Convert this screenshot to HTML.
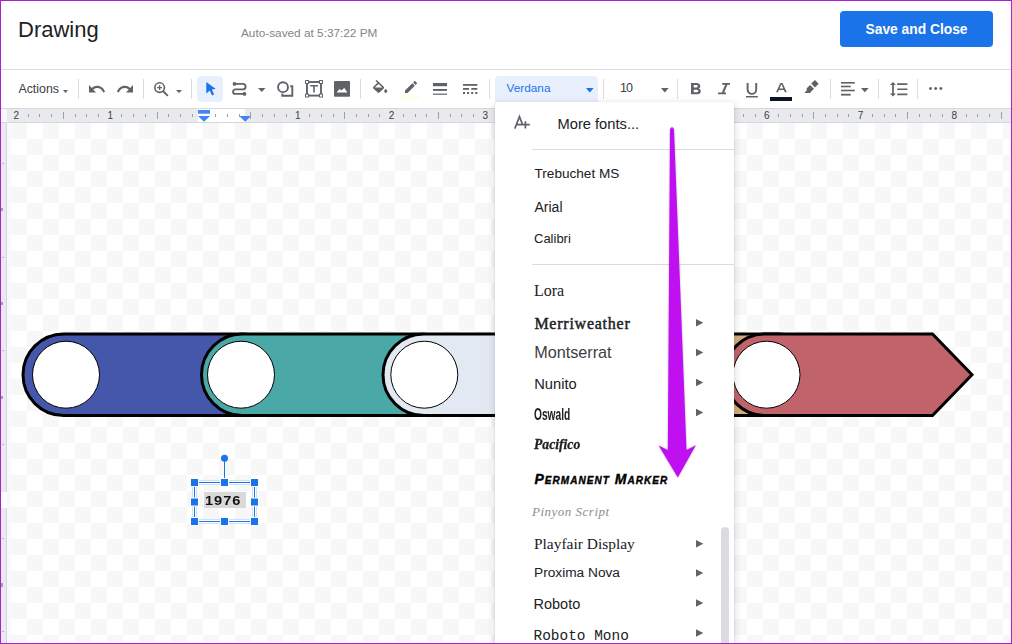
<!DOCTYPE html>
<html><head><meta charset="utf-8">
<style>
*{box-sizing:border-box;margin:0;padding:0}
html,body{width:1012px;height:644px;overflow:hidden;background:#fff;font-family:"Liberation Sans",sans-serif;position:relative}
.a{position:absolute}
.t{position:absolute;white-space:nowrap;line-height:1}
.sep{position:absolute;width:1px;background:#dadce0;top:79px;height:20px}
svg.i{position:absolute;overflow:visible}
.g{fill:#5f6368}
</style></head><body>

<!-- header -->
<div class="t" style="left:18px;top:18.8px;font-size:22px;color:#202124">Drawing</div>
<div class="t" style="left:241px;top:27.9px;font-size:11.8px;color:#80868b">Auto-saved at 5:37:22 PM</div>
<div class="a" style="left:840px;top:11px;width:153px;height:36px;background:#1a73e8;border-radius:4px"></div>
<div class="t" style="left:865.5px;top:22.6px;font-size:13.8px;font-weight:bold;color:#fff">Save and Close</div>

<!-- toolbar border -->
<div class="a" style="left:0;top:69px;width:1012px;height:1px;background:#dadce0"></div>

<!-- ruler -->
<div class="a" style="left:0;top:108px;width:1012px;height:15px;background:#e8eaed;border-top:1px solid #d5d7da;border-bottom:1px solid #d5d7da"></div>
<div class="a" style="left:0;top:109px;width:7px;height:13px;background:#f8f9fa"></div>
<div class="a" style="left:198px;top:109px;width:47px;height:13px;background:#fff"></div>
<div id="canvas" class="a" style="left:7px;top:123px;width:1005px;height:521px;background:#f8f9fa"></div>
<div class="a" style="left:11px;top:123px;width:999px;height:519px;background:repeating-conic-gradient(#fff 0 25%,#f7f7f7 0 50%) 0 0/32px 32px"></div>
<div class="a" style="left:0;top:123px;width:7px;height:521px;background:#e8eaed;border-right:1px solid #d5d7da"></div>
<div class="a" style="left:1px;top:492px;width:5.5px;height:16px;background:#fff"></div>
<div class="a" style="left:1px;top:207.8px;width:2.2px;height:3.5px;background:#5f6368;opacity:.55"></div>
<div class="a" style="left:1px;top:301.7px;width:2.2px;height:3.5px;background:#5f6368;opacity:.55"></div>
<div class="a" style="left:1px;top:395.6px;width:2.2px;height:3.5px;background:#5f6368;opacity:.55"></div>
<div class="a" style="left:1px;top:583.4px;width:2.2px;height:3.5px;background:#5f6368;opacity:.55"></div>
<div class="a" style="left:2px;top:163.0px;width:1.5px;height:1px;background:#b0b4b8"></div>
<div class="a" style="left:2px;top:256.7px;width:1.5px;height:1px;background:#b0b4b8"></div>
<div class="a" style="left:2px;top:350.4px;width:1.5px;height:1px;background:#b0b4b8"></div>
<div class="a" style="left:2px;top:444.1px;width:1.5px;height:1px;background:#b0b4b8"></div>
<div class="a" style="left:2px;top:537.5px;width:1.5px;height:1px;background:#b0b4b8"></div>
<div class="a" style="left:2px;top:631.0px;width:1.5px;height:1px;background:#b0b4b8"></div>

<svg class="a" style="left:0;top:0" width="1012" height="130" id="markers"><g fill="#4285f4"><rect x="198" y="110" width="12" height="3.7"/><path d="M198 115.9H210L204 121.8z"/><path d="M239.3 115.9H251L245.15 121.8z"/></g></svg>
<div id="rulerticks"><div class="t" style="left:13.4px;top:110.6px;width:6px;text-align:center;font-size:10px;color:#3c4043">2</div>
<div class="a" style="left:27.6px;top:114px;width:1px;height:3px;background:#9aa0a6"></div>
<div class="a" style="left:39.3px;top:114px;width:1px;height:3px;background:#9aa0a6"></div>
<div class="a" style="left:51.1px;top:114px;width:1px;height:3px;background:#9aa0a6"></div>
<div class="a" style="left:62.8px;top:112px;width:1px;height:6.5px;background:#9aa0a6"></div>
<div class="a" style="left:74.5px;top:114px;width:1px;height:3px;background:#9aa0a6"></div>
<div class="a" style="left:86.2px;top:114px;width:1px;height:3px;background:#9aa0a6"></div>
<div class="a" style="left:98.0px;top:114px;width:1px;height:3px;background:#9aa0a6"></div>
<div class="t" style="left:107.2px;top:110.6px;width:6px;text-align:center;font-size:10px;color:#3c4043">1</div>
<div class="a" style="left:121.4px;top:114px;width:1px;height:3px;background:#9aa0a6"></div>
<div class="a" style="left:133.2px;top:114px;width:1px;height:3px;background:#9aa0a6"></div>
<div class="a" style="left:144.9px;top:114px;width:1px;height:3px;background:#9aa0a6"></div>
<div class="a" style="left:156.6px;top:112px;width:1px;height:6.5px;background:#9aa0a6"></div>
<div class="a" style="left:168.3px;top:114px;width:1px;height:3px;background:#9aa0a6"></div>
<div class="a" style="left:180.1px;top:114px;width:1px;height:3px;background:#9aa0a6"></div>
<div class="a" style="left:191.8px;top:114px;width:1px;height:3px;background:#9aa0a6"></div>
<div class="a" style="left:215.2px;top:114px;width:1px;height:3px;background:#9aa0a6"></div>
<div class="a" style="left:226.9px;top:114px;width:1px;height:3px;background:#9aa0a6"></div>
<div class="a" style="left:238.7px;top:114px;width:1px;height:3px;background:#9aa0a6"></div>
<div class="a" style="left:250.4px;top:112px;width:1px;height:6.5px;background:#9aa0a6"></div>
<div class="a" style="left:262.1px;top:114px;width:1px;height:3px;background:#9aa0a6"></div>
<div class="a" style="left:273.9px;top:114px;width:1px;height:3px;background:#9aa0a6"></div>
<div class="a" style="left:285.6px;top:114px;width:1px;height:3px;background:#9aa0a6"></div>
<div class="t" style="left:294.8px;top:110.6px;width:6px;text-align:center;font-size:10px;color:#3c4043">1</div>
<div class="a" style="left:309.0px;top:114px;width:1px;height:3px;background:#9aa0a6"></div>
<div class="a" style="left:320.8px;top:114px;width:1px;height:3px;background:#9aa0a6"></div>
<div class="a" style="left:332.5px;top:114px;width:1px;height:3px;background:#9aa0a6"></div>
<div class="a" style="left:344.2px;top:112px;width:1px;height:6.5px;background:#9aa0a6"></div>
<div class="a" style="left:355.9px;top:114px;width:1px;height:3px;background:#9aa0a6"></div>
<div class="a" style="left:367.6px;top:114px;width:1px;height:3px;background:#9aa0a6"></div>
<div class="a" style="left:379.4px;top:114px;width:1px;height:3px;background:#9aa0a6"></div>
<div class="t" style="left:388.6px;top:110.6px;width:6px;text-align:center;font-size:10px;color:#3c4043">2</div>
<div class="a" style="left:402.8px;top:114px;width:1px;height:3px;background:#9aa0a6"></div>
<div class="a" style="left:414.5px;top:114px;width:1px;height:3px;background:#9aa0a6"></div>
<div class="a" style="left:426.3px;top:114px;width:1px;height:3px;background:#9aa0a6"></div>
<div class="a" style="left:438.0px;top:112px;width:1px;height:6.5px;background:#9aa0a6"></div>
<div class="a" style="left:449.7px;top:114px;width:1px;height:3px;background:#9aa0a6"></div>
<div class="a" style="left:461.4px;top:114px;width:1px;height:3px;background:#9aa0a6"></div>
<div class="a" style="left:473.2px;top:114px;width:1px;height:3px;background:#9aa0a6"></div>
<div class="t" style="left:482.4px;top:110.6px;width:6px;text-align:center;font-size:10px;color:#3c4043">3</div>
<div class="a" style="left:496.6px;top:114px;width:1px;height:3px;background:#9aa0a6"></div>
<div class="a" style="left:508.3px;top:114px;width:1px;height:3px;background:#9aa0a6"></div>
<div class="a" style="left:520.1px;top:114px;width:1px;height:3px;background:#9aa0a6"></div>
<div class="a" style="left:531.8px;top:112px;width:1px;height:6.5px;background:#9aa0a6"></div>
<div class="a" style="left:543.5px;top:114px;width:1px;height:3px;background:#9aa0a6"></div>
<div class="a" style="left:555.2px;top:114px;width:1px;height:3px;background:#9aa0a6"></div>
<div class="a" style="left:567.0px;top:114px;width:1px;height:3px;background:#9aa0a6"></div>
<div class="t" style="left:576.2px;top:110.6px;width:6px;text-align:center;font-size:10px;color:#3c4043">4</div>
<div class="a" style="left:590.4px;top:114px;width:1px;height:3px;background:#9aa0a6"></div>
<div class="a" style="left:602.1px;top:114px;width:1px;height:3px;background:#9aa0a6"></div>
<div class="a" style="left:613.9px;top:114px;width:1px;height:3px;background:#9aa0a6"></div>
<div class="a" style="left:625.6px;top:112px;width:1px;height:6.5px;background:#9aa0a6"></div>
<div class="a" style="left:637.3px;top:114px;width:1px;height:3px;background:#9aa0a6"></div>
<div class="a" style="left:649.0px;top:114px;width:1px;height:3px;background:#9aa0a6"></div>
<div class="a" style="left:660.8px;top:114px;width:1px;height:3px;background:#9aa0a6"></div>
<div class="t" style="left:670.0px;top:110.6px;width:6px;text-align:center;font-size:10px;color:#3c4043">5</div>
<div class="a" style="left:684.2px;top:114px;width:1px;height:3px;background:#9aa0a6"></div>
<div class="a" style="left:696.0px;top:114px;width:1px;height:3px;background:#9aa0a6"></div>
<div class="a" style="left:707.7px;top:114px;width:1px;height:3px;background:#9aa0a6"></div>
<div class="a" style="left:719.4px;top:112px;width:1px;height:6.5px;background:#9aa0a6"></div>
<div class="a" style="left:731.1px;top:114px;width:1px;height:3px;background:#9aa0a6"></div>
<div class="a" style="left:742.9px;top:114px;width:1px;height:3px;background:#9aa0a6"></div>
<div class="a" style="left:754.6px;top:114px;width:1px;height:3px;background:#9aa0a6"></div>
<div class="t" style="left:763.8px;top:110.6px;width:6px;text-align:center;font-size:10px;color:#3c4043">6</div>
<div class="a" style="left:778.0px;top:114px;width:1px;height:3px;background:#9aa0a6"></div>
<div class="a" style="left:789.8px;top:114px;width:1px;height:3px;background:#9aa0a6"></div>
<div class="a" style="left:801.5px;top:114px;width:1px;height:3px;background:#9aa0a6"></div>
<div class="a" style="left:813.2px;top:112px;width:1px;height:6.5px;background:#9aa0a6"></div>
<div class="a" style="left:824.9px;top:114px;width:1px;height:3px;background:#9aa0a6"></div>
<div class="a" style="left:836.6px;top:114px;width:1px;height:3px;background:#9aa0a6"></div>
<div class="a" style="left:848.4px;top:114px;width:1px;height:3px;background:#9aa0a6"></div>
<div class="t" style="left:857.6px;top:110.6px;width:6px;text-align:center;font-size:10px;color:#3c4043">7</div>
<div class="a" style="left:871.8px;top:114px;width:1px;height:3px;background:#9aa0a6"></div>
<div class="a" style="left:883.5px;top:114px;width:1px;height:3px;background:#9aa0a6"></div>
<div class="a" style="left:895.3px;top:114px;width:1px;height:3px;background:#9aa0a6"></div>
<div class="a" style="left:907.0px;top:112px;width:1px;height:6.5px;background:#9aa0a6"></div>
<div class="a" style="left:918.7px;top:114px;width:1px;height:3px;background:#9aa0a6"></div>
<div class="a" style="left:930.4px;top:114px;width:1px;height:3px;background:#9aa0a6"></div>
<div class="a" style="left:942.2px;top:114px;width:1px;height:3px;background:#9aa0a6"></div>
<div class="t" style="left:951.4px;top:110.6px;width:6px;text-align:center;font-size:10px;color:#3c4043">8</div>
<div class="a" style="left:965.6px;top:114px;width:1px;height:3px;background:#9aa0a6"></div>
<div class="a" style="left:977.4px;top:114px;width:1px;height:3px;background:#9aa0a6"></div>
<div class="a" style="left:989.1px;top:114px;width:1px;height:3px;background:#9aa0a6"></div>
<div class="a" style="left:1000.8px;top:112px;width:1px;height:6.5px;background:#9aa0a6"></div></div>

<!-- shapes -->
<svg class="a" style="left:0;top:0" width="1012" height="644">
 <g stroke="#000" stroke-width="3">
  <rect x="23" y="334" width="260" height="81.5" rx="40.75" fill="#4557ab"/>
  <rect x="201.5" y="334" width="260" height="81.5" rx="40.75" fill="#4aa8a6"/>
  <rect x="383" y="334" width="260" height="81.5" rx="40.75" fill="#e3e9f3"/>
  <rect x="560" y="334" width="260" height="81.5" rx="40.75" fill="#d4aa7d"/>
  <path d="M765 334 H932.5 L972 374.75 L932.5 415.5 H765 A40.75 40.75 0 0 1 765 334 Z" fill="#c0636a"/>
 </g>
 <g stroke="#000" stroke-width="1" fill="#fff">
  <circle cx="66" cy="374.7" r="33.5"/>
  <circle cx="241" cy="374.7" r="33.5"/>
  <circle cx="424.3" cy="374.7" r="33.5"/>
  <circle cx="766.5" cy="374.7" r="33.5"/>
 </g>
</svg>

<!-- text box 1976 -->
<div class="a" style="left:204px;top:492px;width:42px;height:16px;background:#d9d9d9"></div>
<div class="t" style="left:205px;top:494px;font-size:13px;font-weight:bold;color:#111;letter-spacing:0.9px;transform:scaleX(1.12);transform-origin:0 0">1976</div>
<svg class="a" style="left:0;top:0" width="1012" height="644">
 <g fill="none">
  <rect x="194.5" y="482.5" width="60" height="39" stroke-width="5" stroke="#cfe0fc"/>
  <rect x="194.5" y="482.5" width="60" height="39" stroke-width="3" stroke="#fff"/>
  <rect x="194.5" y="482.5" width="60" height="39" stroke-width="1" stroke="#1a73e8"/>
  <line x1="224.5" y1="458" x2="224.5" y2="479" stroke-width="1" stroke="#1a73e8"/>
 </g>
 <rect x="190" y="478" width="9" height="9" fill="#fff"/><rect x="191" y="479" width="7" height="7" fill="#1a73e8"/><rect x="220" y="478" width="9" height="9" fill="#fff"/><rect x="221" y="479" width="7" height="7" fill="#1a73e8"/><rect x="250" y="478" width="9" height="9" fill="#fff"/><rect x="251" y="479" width="7" height="7" fill="#1a73e8"/><rect x="190" y="497.5" width="9" height="9" fill="#fff"/><rect x="191" y="498.5" width="7" height="7" fill="#1a73e8"/><rect x="250" y="497.5" width="9" height="9" fill="#fff"/><rect x="251" y="498.5" width="7" height="7" fill="#1a73e8"/><rect x="190" y="517" width="9" height="9" fill="#fff"/><rect x="191" y="518" width="7" height="7" fill="#1a73e8"/><rect x="220" y="517" width="9" height="9" fill="#fff"/><rect x="221" y="518" width="7" height="7" fill="#1a73e8"/><rect x="250" y="517" width="9" height="9" fill="#fff"/><rect x="251" y="518" width="7" height="7" fill="#1a73e8"/>
 <circle cx="224.5" cy="458.3" r="3.5" fill="#1a73e8"/>
</svg>

<!-- toolbar -->
<div class="t" style="left:18.4px;top:82.6px;font-size:12.4px;color:#3c4043">Actions</div>
<svg class="i" style="left:63px;top:89.5px" width="5" height="3" viewBox="0 0 5 3"><path class="g" d="M0 0h5L2.5 3z"/></svg>
<div class="sep" style="left:78px"></div>
<svg class="i" style="left:89px;top:84.8px" width="16" height="7.5" viewBox="2 7 20.47 9" preserveAspectRatio="none"><path class="g" d="M12.5 8c-2.65 0-5.05.99-6.9 2.6L2 7v9h9l-3.62-3.62c1.39-1.16 3.160-1.88 5.12-1.88 3.54 0 6.55 2.31 7.6 5.5l2.37-.78C21.08 11.03 17.15 8 12.5 8z"/></svg>
<svg class="i" style="left:117px;top:84.8px" width="16" height="7.5" viewBox="1.54 7 20.46 9" preserveAspectRatio="none"><path class="g" d="M18.4 10.6C16.55 8.99 14.15 8 11.5 8c-4.65 0-8.58 3.03-9.96 7.22L3.9 16c1.05-3.19 4.05-5.5 7.6-5.5 1.95 0 3.73.72 5.12 1.88L13 16h9V7l-3.6 3.6z"/></svg>
<div class="sep" style="left:143px"></div>
<svg class="i" style="left:154px;top:82.3px" width="14.5" height="14.5" viewBox="0 0 14.5 14.5"><circle cx="5.6" cy="5.6" r="4.8" fill="none" stroke="#5f6368" stroke-width="1.6"/><path d="M9 9l4.8 4.8" stroke="#5f6368" stroke-width="1.9"/><path d="M5.6 3.2v4.8M3.2 5.6h4.8" stroke="#5f6368" stroke-width="1.3"/></svg>
<svg class="i" style="left:175.5px;top:89.5px" width="6" height="3" viewBox="0 0 6 3"><path class="g" d="M0 0h6L3 3z"/></svg>
<div class="sep" style="left:191px"></div>
<div class="a" style="left:197px;top:76px;width:26px;height:26px;background:#e8f0fe;border-radius:4px"></div>
<svg class="i" style="left:205.5px;top:82px" width="10" height="14" viewBox="0 0 10 14"><path fill="#1a73e8" d="M0.3 0L9.8 7.1 5.9 7.6 8.1 12.6 6 13.6 3.8 8.6 0.3 11.4z"/></svg>
<svg class="i" style="left:231.7px;top:82px" width="15" height="14" viewBox="0 0 15 14"><path fill="none" stroke="#5f6368" stroke-width="1.9" d="M2.5 1.9H10.85A2.75 2.75 0 0 1 10.85 7.4H3.35A2.25 2.25 0 0 0 3.35 11.9H12.4"/><circle cx="2.5" cy="1.9" r="1.9" class="g"/><circle cx="12.4" cy="11.9" r="1.9" class="g"/></svg>
<svg class="i" style="left:257.5px;top:88px" width="7.5" height="4" viewBox="0 0 7.5 4"><path class="g" d="M0 0h7.5L3.75 4z"/></svg>
<svg class="i" style="left:276.5px;top:81.8px" width="17" height="15" viewBox="0 0 17 15"><circle cx="6" cy="5.2" r="4.95" fill="none" stroke="#5f6368" stroke-width="1.9"/><path d="M13.3 4.2H15.3V13.8H5.3V11.6" fill="none" stroke="#5f6368" stroke-width="1.9"/></svg>
<svg class="i" style="left:305px;top:80.2px" width="18" height="17.6" viewBox="0 0 18 17.6"><rect x="2" y="2" width="14" height="13.6" fill="none" stroke="#5f6368" stroke-width="1.9"/><g class="g"><rect x="0" y="0" width="4" height="4" rx="0.6"/><rect x="14" y="0" width="4" height="4" rx="0.6"/><rect x="0" y="13.6" width="4" height="4" rx="0.6"/><rect x="14" y="13.6" width="4" height="4" rx="0.6"/></g><g fill="#fff"><rect x="1" y="1" width="2" height="2"/><rect x="15" y="1" width="2" height="2"/><rect x="1" y="14.6" width="2" height="2"/><rect x="15" y="14.6" width="2" height="2"/></g><path class="g" d="M5.2 4.9H13V6.6H9.8V12.4H8.2V6.6H5.2z"/></svg>
<svg class="i" style="left:334px;top:81.3px" width="16" height="15.7" viewBox="0 0 16 15.7"><rect width="16" height="15.7" rx="1" class="g"/><path fill="#fff" d="M2.6 11.4L5.6 8.0 7.2 9.5 10.3 7.0 13.4 11.4z"/></svg>
<div class="sep" style="left:360px"></div>
<svg class="i" style="left:373px;top:80.3px" width="14.3" height="12.5" viewBox="3 0 18 16.5" preserveAspectRatio="none"><path class="g" d="M16.56 8.94L7.62 0 6.21 1.41l2.38 2.38-5.15 5.15c-.59.59-.59 1.54 0 2.12l5.5 5.5c.29.29.68.44 1.06.44s.77-.15 1.06-.44l5.5-5.5c.59-.58.59-1.53 0-2.12zM5.21 10L10 5.21 14.79 10H5.21zM19 11.5s-2 2.17-2 3.5c0 1.1.9 2 2 2s2-.9 2-2c0-1.33-2-3.5-2-3.5z"/></svg>
<div class="a" style="left:399px;top:95px;width:22px;height:3.5px;background:#fefeec"></div>
<svg class="i" style="left:405px;top:80.9px" width="12" height="12" viewBox="3 3 18 18" preserveAspectRatio="none"><path class="g" d="M3 17.25V21h3.75L17.81 9.94l-3.75-3.75L3 17.25zM20.71 7.04c.39-.39.39-1.02 0-1.41l-2.34-2.34c-.39-.39-1.02-.39-1.41 0l-1.83 1.830 3.75 3.75 1.83-1.83z"/></svg>
<svg class="i" style="left:433px;top:83.2px" width="14" height="12" viewBox="0 0 14 12"><g class="g"><rect x="0" y="0" width="14" height="3.2"/><rect x="0" y="6" width="14" height="1.9"/><rect x="0" y="10.6" width="14" height="1.2"/></g></svg>
<svg class="i" style="left:462.7px;top:84.2px" width="14.3" height="10" viewBox="0 0 14.3 10"><g class="g"><rect x="0" y="0" width="14.3" height="1.8"/><rect x="0" y="4" width="6" height="1.8"/><rect x="8.3" y="4" width="6" height="1.8"/><rect x="0" y="8" width="2" height="2"/><rect x="4.1" y="8" width="2" height="2"/><rect x="8.2" y="8" width="2" height="2"/><rect x="12.3" y="8" width="2" height="2"/></g></svg>
<div class="sep" style="left:489px"></div>
<div class="a" style="left:495px;top:76px;width:103px;height:26px;background:#e8f0fe;border-radius:4px 4px 0 0"></div>
<div class="t" style="left:506.5px;top:83px;font-size:11.8px;color:#1a73e8">Verdana</div>
<svg class="i" style="left:586px;top:87.5px" width="7.6" height="4.5" viewBox="0 0 7.6 4.5"><path fill="#1a73e8" d="M0 0h7.6L3.8 4.5z"/></svg>
<div class="sep" style="left:603px"></div>
<div class="t" style="left:620px;top:82.3px;font-size:12.5px;letter-spacing:-0.9px;color:#3c4043">10</div>
<svg class="i" style="left:661px;top:87.5px" width="7.6" height="4.5" viewBox="0 0 7.6 4.5"><path class="g" d="M0 0h7.6L3.8 4.5z"/></svg>
<div class="sep" style="left:677px"></div>
<svg class="i" style="left:690.7px;top:83.2px" width="9.8" height="11.3" viewBox="7 4 10.75 14" preserveAspectRatio="none"><path class="g" d="M15.6 10.79c.97-.67 1.65-1.77 1.65-2.79 0-2.26-1.75-4-4-4H7v14h7.04c2.09 0 3.71-1.7 3.71-3.79 0-1.52-.86-2.82-2.150-3.42zM10 6.5h3c.83 0 1.5.67 1.5 1.5s-.67 1.5-1.5 1.5h-3v-3zm3.5 9H10v-3h3.5c.83 0 1.5.67 1.5 1.5s-.67 1.5-1.5 1.5z"/></svg>
<svg class="i" style="left:717.8px;top:83.2px" width="12" height="11.3" viewBox="0 0 12 11.3"><path class="g" d="M4.2 0H12V1.8H9.4L6.2 9.5H8V11.3H0V9.5H3.9L7.1 1.8H4.2z"/></svg>
<svg class="i" style="left:746px;top:83.2px" width="11.8" height="14.5" viewBox="0 0 11.8 14.5"><path fill="none" stroke="#5f6368" stroke-width="1.9" d="M1.6 0V6.6A4.3 4.3 0 0 0 10.2 6.6V0"/><rect y="13" width="11.8" height="1.5" class="g"/></svg>
<svg class="i" style="left:775.6px;top:83.2px" width="10.8" height="9.3" viewBox="0 0 10.8 9.3"><path class="g" d="M4.3 0H6.5L10.8 9.3H8.9L7.9 7H2.9L1.9 9.3H0zM3.5 5.4H7.3L5.4 1.3z"/></svg>
<div class="a" style="left:770px;top:97px;width:22px;height:3.7px;background:#0b1423"></div>
<svg class="i" style="left:800px;top:76px" width="24" height="22" viewBox="0 0 24 22"><path class="g" d="M15 4.1L18.7 7.8 14.8 11.5 11.2 7.6z M10.1 8.9L13.9 12.8 10.4 16.4 9.8 16.9 4.3 16.9 6.7 14.4 6.7 12.3z"/></svg>
<div class="sep" style="left:830px"></div>
<svg class="i" style="left:841px;top:82.2px" width="13.8" height="13.6" viewBox="0 0 13.8 13.6"><g class="g"><rect width="13.8" height="1.6"/><rect y="3.7" width="9.7" height="1.6"/><rect y="7.7" width="13.8" height="1.6"/><rect y="11.8" width="9.7" height="1.8"/></g></svg>
<svg class="i" style="left:861.2px;top:87.8px" width="7.7" height="4.2" viewBox="0 0 7.7 4.2"><path class="g" d="M0 0h7.7L3.85 4.2z"/></svg>
<div class="sep" style="left:878px"></div>
<svg class="i" style="left:889.7px;top:81.7px" width="17.4" height="14.5" viewBox="1.5 3.5 20.5 17" preserveAspectRatio="none"><path class="g" d="M6 7h2.5L5 3.5 1.5 7H4v10H1.5L5 20.5 8.5 17H6V7zm4-2v2h12V5H10zm0 14h12v-2H10v2zm0-6h12v-2H10v2z"/></svg>
<div class="sep" style="left:917px"></div>
<svg class="i" style="left:929.4px;top:87.3px" width="13.4" height="3" viewBox="0 0 13.4 3"><g class="g"><circle cx="1.5" cy="1.5" r="1.5"/><circle cx="6.7" cy="1.5" r="1.5"/><circle cx="11.9" cy="1.5" r="1.5"/></g></svg>

<!-- menu -->
<div class="a" style="left:495px;top:102px;width:239px;height:560px;background:#fff;border-radius:4px;box-shadow:0 2px 6px 2px rgba(60,64,67,.13),0 1px 2px rgba(60,64,67,.2)"></div>
<svg class="i" style="left:514.4px;top:115.5px" width="16" height="12.8" viewBox="0 0 16 12.8"><path fill="none" stroke="#5f6368" stroke-width="1.7" stroke-linejoin="miter" d="M0.8 12.6L5.5 0.7 8.6 8.7M2.4 8.7H15.8M11.4 5.2V12.6"/></svg>
<div class="t" style="left:557.5px;top:117.3px;font-size:14.7px;color:#202124">More fonts...</div>
<div class="a" style="left:532px;top:148.5px;width:202px;height:1px;background:#dadce0"></div>
<div class="t" style="left:534.5px;top:167.2px;font-size:13.6px;color:#202124">Trebuchet MS</div>
<div class="t" style="left:534.5px;top:200.4px;font-size:14px;color:#202124">Arial</div>
<div class="t" style="left:534px;top:232px;font-size:13px;color:#202124">Calibri</div>
<div class="a" style="left:532px;top:264px;width:202px;height:1px;background:#dadce0"></div>
<div class="t" style="left:534px;top:283.3px;font-size:16px;color:#202124;font-family:'Liberation Serif',serif">Lora</div>
<div class="t" style="left:534.4px;top:315.5px;font-size:16px;letter-spacing:0.75px;color:#202124;font-family:'Liberation Serif',serif;-webkit-text-stroke:0.45px #202124">Merriweather</div>
<div class="t" style="left:534.2px;top:344.2px;font-size:16.2px;color:#3c4043">Montserrat</div>
<div class="t" style="left:534.2px;top:376.5px;font-size:14.7px;color:#202124">Nunito</div>
<div class="t" style="left:534.2px;top:406px;font-size:17px;font-weight:bold;color:#202124;transform:scaleX(0.6);transform-origin:0 0">Oswald</div>
<div class="t" style="left:534.4px;top:437px;font-size:15px;color:#202124;font-family:'Liberation Serif',serif;font-weight:bold;font-style:italic;-webkit-text-stroke:0.3px #202124;transform:scaleX(0.91);transform-origin:0 0">Pacifico</div>
<div class="t" style="left:534.4px;top:472px;font-size:14px;color:#000;font-weight:bold;font-style:italic;font-variant:small-caps;letter-spacing:1.05px;-webkit-text-stroke:0.35px #000">Permanent Marker</div>
<div class="t" style="left:532px;top:505.3px;font-size:13px;letter-spacing:0.5px;color:#8a8f94;font-family:'Liberation Serif',serif;font-style:italic">Pinyon Script</div>
<div class="t" style="left:534px;top:536px;font-size:15.45px;color:#202124;font-family:'Liberation Serif',serif">Playfair Display</div>
<div class="t" style="left:534px;top:566.4px;font-size:13.7px;color:#202124">Proxima Nova</div>
<div class="t" style="left:533.5px;top:596.5px;font-size:14.5px;color:#202124">Roboto</div>
<div class="t" style="left:533.5px;top:628.5px;font-size:14.45px;color:#202124;font-family:'Liberation Mono',monospace">Roboto Mono</div>
<svg class="a" style="left:0;top:0" width="1012" height="644"><g fill="#5f6368">
<path d="M696 318.9V326.4L703.3 322.65z"/>
<path d="M696 348.8V356.3L703.3 352.55z"/>
<path d="M696 378.8V386.3L703.3 382.55z"/>
<path d="M696 408.7V416.2L703.3 412.45z"/>
<path d="M696 539.9V547.4L703.3 543.65z"/>
<path d="M696 569.3V576.8L703.3 573.05z"/>
<path d="M696 599.3V606.8L703.3 603.05z"/>
<path d="M696 629.3V636.8L703.3 633.05z"/>
</g></svg>
<div class="a" style="left:721px;top:527px;width:7.5px;height:130px;background:#dadce0;border-radius:4px"></div>
<!-- purple arrow -->
<svg class="a" style="left:0;top:0;filter:drop-shadow(0.8px 0.8px 0.8px rgba(0,0,0,.28))" width="1012" height="644"><path fill="#c00ff0" d="M670 129.5Q672 125 674 129.5L686.5 449.9 695.9 445.2 677.8 477.6 658.6 445.5 667.8 449.9z"/></svg>


<!-- purple frame -->
<div class="a" style="left:0;top:0;width:1012px;height:644px;border:1px solid #aa1ed4;pointer-events:none"></div>
</body></html>
